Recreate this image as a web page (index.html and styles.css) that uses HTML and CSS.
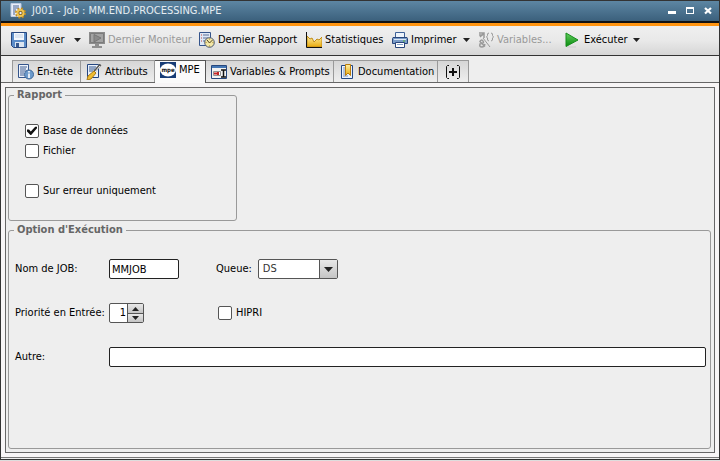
FILE: index.html
```html
<!DOCTYPE html>
<html lang="fr">
<head>
<meta charset="utf-8">
<title>J001 - Job : MM.END.PROCESSING.MPE</title>
<link rel="stylesheet" href="styles.css">
</head>
<body>
<div class="window">
  <header class="titlebar">
    <svg class="icon" viewBox="0 0 16 16"><path d="M1 .5h10v13H1z" fill="#e8eef8" stroke="#bccbe2"/><path d="M3 3h6M3 5h6M3 7h3M3 9h2M3 11h2" stroke="#4a6595"/><circle cx="10.500" cy="10" r="4.600" fill="none" stroke="#c08c1c" stroke-width="1.800" stroke-dasharray="2 1.600"/><circle cx="10.500" cy="10" r="3" fill="#6b4d12" stroke="#efc34d" stroke-width="2"/><circle cx="10.500" cy="10" r="1.200" fill="#e9edf4"/></svg>
    <h1 class="title">J001 - Job : MM.END.PROCESSING.MPE</h1>
    <div class="window-buttons">
      <button type="button" aria-label="Réduire"><svg viewBox="0 0 8 8"><path d="M0 4h8v3H0z" fill="#fff"/></svg></button>
      <button type="button" aria-label="Agrandir"><svg viewBox="0 0 8 8"><path d="M0 0h8v7H0zM1 2v4h6V2z" fill="#fff" fill-rule="evenodd"/></svg></button>
      <button type="button" aria-label="Fermer"><svg viewBox="0 0 8 8"><path d="M1 1l6 5.500M7 1L1 6.500" stroke="#fff" stroke-width="2.200"/></svg></button>
    </div>
  </header>

  <nav class="toolbar">
    <button type="button" class="tool">
      <svg class="icon" viewBox="0 0 16 16"><path d="M.5.5h15v15h-13l-2-2z" fill="#5b8cc8" stroke="#27477f"/><path d="M3 1h10v7H3z" fill="#f3f7fc"/><path d="M4 3h8M4 5h8" stroke="#c3d2e6"/><path d="M4 10h9v5H4z" fill="#dce5f0"/><path d="M5 11h3v4H5z" fill="#37588e"/></svg>
      <span>Sauver</span><svg class="arrow" viewBox="0 0 7 4"><path d="M0 0h7L3.500 4z"/></svg>
    </button>
    <button type="button" class="tool" disabled>
      <svg class="icon" viewBox="0 0 16 16"><path d="M0 0h16v12H0z" fill="#8c8c8c"/><path d="M1.500 1.500h13v9h-13z" fill="#a3a3a3" stroke="#7b7b7b"/><path d="M5 2.500L12 6l-7 4z" fill="#8a8a8a" stroke="#777"/><path d="M6 12h4v2h3v2H3v-2h3z" fill="#909090"/></svg>
      <span>Dernier Moniteur</span>
    </button>
    <button type="button" class="tool">
      <svg class="icon" viewBox="0 0 16 16"><path d="M.5.5h11v13H.5z" fill="#dfe8f6" stroke="#34548b"/><path d="M2 3h1M2 6h1M2 9h1" stroke="#c3473f"/><path d="M4 3h6M4 6h5M4 9h2" stroke="#5b6f95"/><circle cx="10.500" cy="10.500" r="4.800" fill="#f4e7a6" stroke="#4c5970"/><path d="M8 8l2.500 3L13.500 8" fill="none" stroke="#4d431f"/><path d="M10.500 6.500v1M10.500 13.500v1M6.500 10.500h1M13.500 10.500h1" stroke="#9d812c"/></svg>
      <span>Dernier Rapport</span>
    </button>
    <button type="button" class="tool">
      <svg class="icon" viewBox="0 0 16 16"><defs><linearGradient id="gold" x2="0" y2="1"><stop stop-color="#fff0a5"/><stop offset="1" stop-color="#e8a90b"/></linearGradient></defs><path d="M1 4l3 3 2-1 2 4 3-3 2 1 3-3v10H1z" fill="url(#gold)" stroke="#c18b16"/><path d="M.5 0v15.500H16" fill="none" stroke="#111"/></svg>
      <span>Statistiques</span>
    </button>
    <button type="button" class="tool">
      <svg class="icon" viewBox="0 0 16 16"><path d="M3.500.5h9V7h-9z" fill="#eef4fb" stroke="#3e6198"/><path d="M1 5.500h14l.5 1v5H.5v-5z" fill="#7b9cc7" stroke="#29467c"/><path d="M2 7.500h12" stroke="#dce7f5"/><path d="M11 9h2" stroke="#58b93b"/><path d="M3.500 10.500h9v5h-9z" fill="#fff" stroke="#29467c"/><path d="M5 12.500h6" stroke="#87a2c7"/></svg>
      <span>Imprimer</span><svg class="arrow" viewBox="0 0 7 4"><path d="M0 0h7L3.500 4z"/></svg>
    </button>
    <button type="button" class="tool" disabled>
      <svg class="icon" viewBox="0 0 16 16" fill="none" stroke="#999"><path d="M1 1h5v5M2 5l4-4M1 3h4" stroke-width="1.500"/><path d="M11 1Q9 1 9.500 3.500L8.500 5l1 1Q9 9 11 9M13 1q2 0 1.500 2.500l1 1.500-1 1Q15 9 13 9M5 6l7 9"/><path d="M7 14.500L2 9.500Q3 7 5 9T2 12q-1 3 2 3 2 0 3-3" stroke-width="1.500"/></svg>
      <span>Variables...</span>
    </button>
    <button type="button" class="tool">
      <svg class="icon" viewBox="0 0 16 16"><defs><linearGradient id="run" x2="0" y2="1"><stop stop-color="#65cf60"/><stop offset="1" stop-color="#078b0d"/></linearGradient></defs><path d="M2 15h9" stroke="#ccc"/><path d="M1 1l12 7L1 14.500z" fill="url(#run)" stroke="#168d1c"/></svg>
      <span>Exécuter</span><svg class="arrow" viewBox="0 0 7 4"><path d="M0 0h7L3.500 4z"/></svg>
    </button>
  </nav>

  <div class="tabs" role="tablist">
    <button type="button" class="tab" role="tab">
      <svg class="icon" viewBox="0 0 16 16"><path d="M.5.5h10v13H.5z" fill="#eef3fb" stroke="#34548b"/><path d="M2 3h7M2 5h6M2 7h7M2 9h4M2 11h4" stroke="#3e5c90"/><circle cx="11" cy="10.500" r="4.500" fill="#6c9acb" stroke="#3d6799"/><path d="M11 7v1.500M11 9.500V14" stroke="#fff" stroke-width="1.600"/></svg>
      <span>En-tête</span>
    </button>
    <button type="button" class="tab" role="tab">
      <svg class="icon" viewBox="0 0 16 16"><path d="M1.500.5h11v13h-11z" fill="#e9f0fa" stroke="#244680"/><path d="M3 3h7M3 5h6M3 7h4" stroke="#35568c"/><path d="M14.500.5L8 8" stroke="#575757" stroke-width="2.500"/><path d="M14 2L9 8" stroke="#f3f3f3"/><path d="M8 7l2 2-5 6-4 1 1-4z" fill="#efbd32" stroke="#aa7a15"/></svg>
      <span>Attributs</span>
    </button>
    <button type="button" class="tab selected" role="tab" aria-selected="true">
      <svg class="icon" viewBox="0 0 16 16"><path d="M0 0h16v16H0z" fill="#173c76"/><ellipse cx="8" cy="8" rx="8" ry="6.500" fill="#fff"/><text class="logo-text" x="8" y="10" text-anchor="middle">mpe</text></svg>
      <span>MPE</span>
    </button>
    <button type="button" class="tab" role="tab">
      <svg class="icon" viewBox="0 0 16 16"><path d="M.5 1.500h15v13H.5z" fill="#f3f3f3" stroke="#26477d"/><path d="M1 2h14v2H1z" fill="#4477b5"/><path d="M2.500 7.500h7v4h-7z" fill="#fff" stroke="#929292"/><path d="M3 9.500h3M7 8v3" stroke="#c42626" stroke-width="2"/><path d="M10 6h5M10 13h5M12.500 6v7" stroke="#111" stroke-width="1.500"/></svg>
      <span>Variables &amp; Prompts</span>
    </button>
    <button type="button" class="tab" role="tab">
      <svg class="icon" viewBox="0 0 16 16"><path d="M2.500 1.500h11v13h-11z" fill="#eaf1fc" stroke="#234783"/><path d="M4 4h3M4 6h3M4 8h3M4 10h3M4 12h5" stroke="#7893bd"/><path d="M6.500.5h5v11L9 9l-2.500 2.500z" fill="url(#gold)" stroke="#b87c0d"/></svg>
      <span>Documentation</span>
    </button>
    <button type="button" class="tab add" role="tab" aria-label="Ajouter">
      <svg class="icon" viewBox="0 0 16 16" fill="none" stroke="#111"><path d="M4 1.500H2.500l-1 1v11l1 1H4M12 1.500h1.500l1 1v11l-1 1H12"/><path d="M8 4v8M4 8h8" stroke-width="2"/></svg>
    </button>
  </div>

  <main class="body">
    <form class="panel">
      <fieldset class="group report">
        <legend>Rapport</legend>
        <div class="checks">
          <label class="check"><input type="checkbox" checked><span>Base de données</span></label>
          <label class="check"><input type="checkbox"><span>Fichier</span></label>
          <label class="check apart"><input type="checkbox"><span>Sur erreur uniquement</span></label>
        </div>
      </fieldset>
      <fieldset class="group options">
        <legend>Option d'Exécution</legend>
        <div class="fields">
          <label for="job">Nom de JOB:</label>
          <input class="text job" id="job" value="MMJOB">
          <div class="queue">
            <label for="queue">Queue:</label>
            <div class="combo">
              <select id="queue"><option>DS</option></select>
              <svg class="drop" viewBox="0 0 17 18"><path d="M4 7h9l-4.500 5z"/></svg>
            </div>
          </div>
          <label for="priority">Priorité en Entrée:</label>
          <div class="spinner">
            <input type="text" inputmode="numeric" id="priority" value="1">
            <button type="button" aria-label="Augmenter"><svg viewBox="0 0 7 4"><path d="M0 4h7L3.500 0z"/></svg></button>
            <button type="button" aria-label="Diminuer"><svg viewBox="0 0 7 4"><path d="M0 0h7L3.500 4z"/></svg></button>
          </div>
          <label class="check"><input type="checkbox"><span>HIPRI</span></label>
          <label for="other">Autre:</label>
          <input class="text other" id="other">
        </div>
      </fieldset>
    </form>
  </main>
</div>
</body>
</html>
```
FILE: styles.css
```css
* { box-sizing: border-box; }

body {
  margin: 0;
  font: 11px/14px "DejaVu Sans Condensed", "Noto Sans", sans-serif;
  color: #000;
  background: #ddd;
}

button, input, select { font: inherit; color: inherit; margin: 0; }
button { border: 0; padding: 0; background: none; }
svg { display: block; flex: none; }

.window {
  display: flex;
  flex-direction: column;
  min-height: calc(100vh - 1px);
  border: 1px solid #333;
  background: #eee;
}

.icon { width: 16px; height: 16px; }

.titlebar {
  display: flex;
  align-items: center;
  gap: 6px;
  height: 22px;
  padding: 0 7px 0 9px;
  color: #e6edf2;
  background: linear-gradient(#5d86a3, #3b607c);
  border-bottom: 2px solid #111;
}
.title { flex: 1; margin: 0; font: inherit; white-space: nowrap; }
.window-buttons { display: flex; gap: 10px; }
.window-buttons svg { width: 8px; height: 8px; }

.toolbar {
  display: grid;
  grid-template-columns: 78px 110px 107px 86px 86px 87px 83px;
  align-items: center;
  height: 33px;
  padding-left: 10px;
  border-top: 3px solid #ff9410;
  border-bottom: 1px solid #333;
  background: linear-gradient(#efefef, #e9e9e9 50%, #d6d6d6);
}
.tool { display: flex; align-items: center; gap: 3px; padding-bottom: 1px; white-space: nowrap; }
.tool:disabled { color: #999; }
.arrow { width: 7px; height: 4px; margin-left: auto; margin-right: 8px; fill: #222; }

.tabs {
  display: grid;
  grid-template-columns: 69px 74px 51px 128px 104px 31px;
  height: 27px;
  padding: 4px 0 0 11px;
  border-bottom: 1px solid #666;
}
.tab {
  display: flex;
  align-items: center;
  gap: 3px;
  padding: 0 0 0 5px;
  border: 1px solid #999;
  border-width: 1px 1px 0 0;
  background: linear-gradient(#d6d6d6, #eee);
  white-space: nowrap;
}
.tab:first-child { border-left-width: 1px; }
.tab.selected { margin-bottom: -1px; padding-bottom: 5px; border-color: #555; background: #fafafa; }
.tab.add { padding-left: 7px; }
.logo-text { font: bold 6px "DejaVu Sans Condensed", sans-serif; fill: #111; }

.body {
  flex: 1;
  display: flex;
  margin-bottom: 1px;
  padding: 4px;
  border-bottom: 1px solid #777;
  background: #f7f5f6;
}
.panel {
  flex: 1;
  display: flex;
  flex-direction: column;
  gap: 3px;
  padding: 1px 3px 3px 2px;
  border: 1px solid #666;
  background: #eee;
}

.group { min-width: 0; margin: 0; padding: 20px 4px 0 5px; border: 1px solid #999; border-radius: 3px; }
.group legend { padding: 0 3px; line-height: 12px; font-weight: bold; color: #666; }
.report { width: 229px; height: 132px; }
.options { flex: 1; padding-top: 23px; }

.checks { padding-left: 11px; }
.check { display: flex; align-items: center; gap: 4px; height: 20px; }
.check.apart { margin-top: 20px; }
.check input {
  appearance: none;
  width: 14px;
  height: 14px;
  border: 1px solid #555;
  border-radius: 2px;
  background: #fff;
}
.check input:checked::before {
  content: "";
  display: block;
  width: 10px;
  height: 9px;
  margin: 1px;
  background: #111;
  clip-path: polygon(0 40%, 20% 40%, 38% 62%, 82% 8%, 100% 8%, 100% 24%, 42% 100%, 34% 100%, 0 60%);
}

.fields {
  display: grid;
  grid-template-columns: 94px 107px 1fr;
  row-gap: 24px;
  align-items: center;
  padding-left: 1px;
}
.text {
  width: 100%;
  height: 20px;
  padding: 0 2px;
  border: 1px solid #222;
  border-radius: 2px;
  background: #fff;
}
.job { width: 70px; }
.other { grid-column: 2 / -1; }
.queue { display: flex; align-items: center; gap: 6px; }
.combo { display: grid; width: 80px; height: 20px; }
.combo select {
  grid-area: 1 / 1;
  appearance: none;
  padding: 0 20px 0 4px;
  border: 1px solid #555;
  border-radius: 2px;
  color: #333;
  background: #fff;
}
.drop {
  grid-area: 1 / 1;
  justify-self: end;
  align-self: center;
  width: 18px;
  height: 18px;
  margin-right: 1px;
  border-left: 1px solid #555;
  background: linear-gradient(#e8e8e8, #c4c4c4);
  fill: #222;
  pointer-events: none;
}
.spinner {
  display: grid;
  grid-template: 1fr 1fr / 1fr 16px;
  width: 35px;
  height: 20px;
  border: 1px solid #555;
  border-radius: 2px;
  background: #fff;
  overflow: hidden;
}
.spinner input {
  grid-row: 1 / 3;
  width: 100%;
  min-width: 0;
  padding: 0 1px;
  border: 0;
  background: none;
  text-align: right;
}
.spinner button {
  display: grid;
  place-items: center;
  border-left: 1px solid #555;
  background: linear-gradient(#e8e8e8, #c4c4c4);
}
.spinner button:last-child { border-top: 1px solid #555; }
.spinner svg { width: 7px; height: 4px; fill: #222; }
.fields .check { padding-left: 2px; }
```
